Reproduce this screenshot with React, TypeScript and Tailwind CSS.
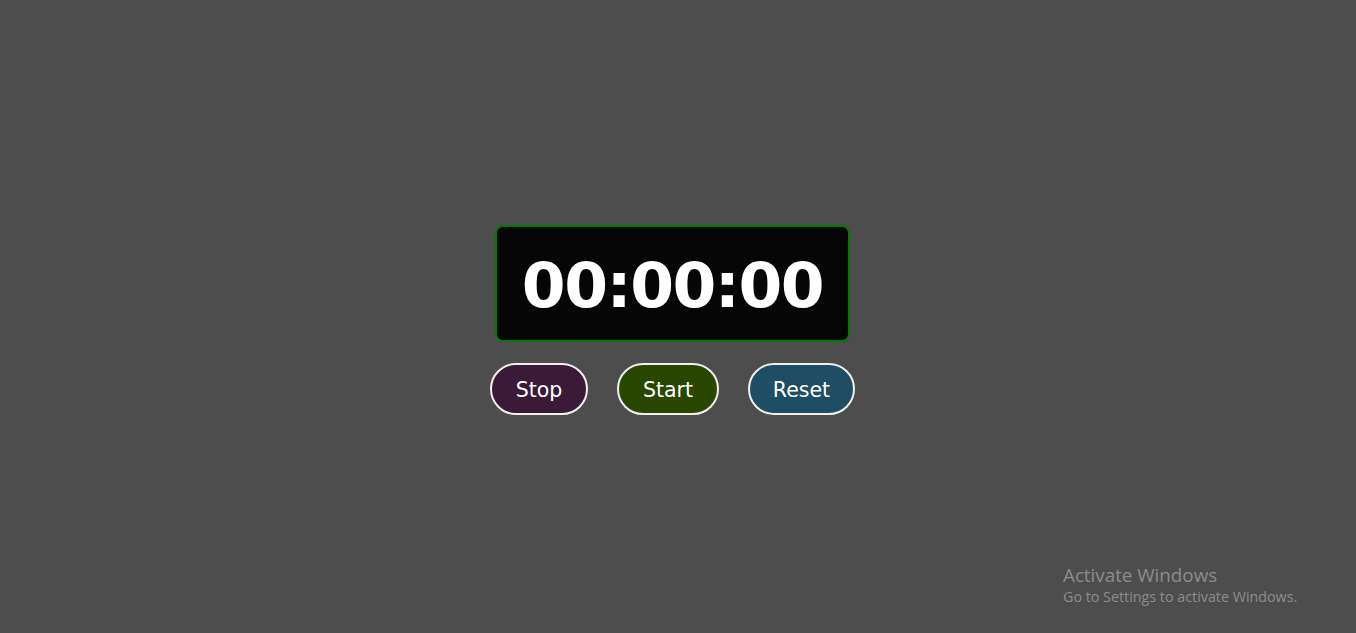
import React from "react";

export default function App() {
  return (
    <div className="relative w-full h-[633px] bg-[#4d4d4d] overflow-hidden flex items-center justify-center pr-[11px] pt-[7px]">
      <div className="flex flex-col items-center gap-[21px]">
        <div className="w-[355px] h-[117px] rounded-[8px] border-2 border-[#007a00] bg-[#060606] flex items-center justify-center">
          <span
            className="text-white font-bold text-[63px] leading-none tracking-[-1.5px] pt-[4px]"
            style={{ fontFamily: '"DejaVu Sans", Verdana, sans-serif' }}
          >
            00:00:00
          </span>
        </div>
        <div
          className="flex items-center gap-[29px] text-white text-[20.5px]"
          style={{ fontFamily: '"DejaVu Sans", Verdana, sans-serif' }}
        >
          <button className="w-[98px] h-[52px] pt-[2px] rounded-full border-2 border-[#f0f0f0] bg-[#3b1a38] text-white">
            Stop
          </button>
          <button className="w-[102px] h-[52px] pt-[2px] rounded-full border-2 border-[#f0f0f0] bg-[#2a4700] text-white">
            Start
          </button>
          <button className="w-[107px] h-[52px] pt-[2px] rounded-full border-2 border-[#f0f0f0] bg-[#1f4d63] text-white">
            Reset
          </button>
        </div>
      </div>
      <div
        className="absolute left-[1063px] top-[564px] text-[#8c8c8c]"
        style={{ fontFamily: '"Open Sans", "Noto Sans", sans-serif' }}
      >
        <div className="text-[18.8px] leading-[22px]">Activate Windows</div>
        <div className="text-[14.3px] leading-[21px]">Go to Settings to activate Windows.</div>
      </div>
    </div>
  );
}
